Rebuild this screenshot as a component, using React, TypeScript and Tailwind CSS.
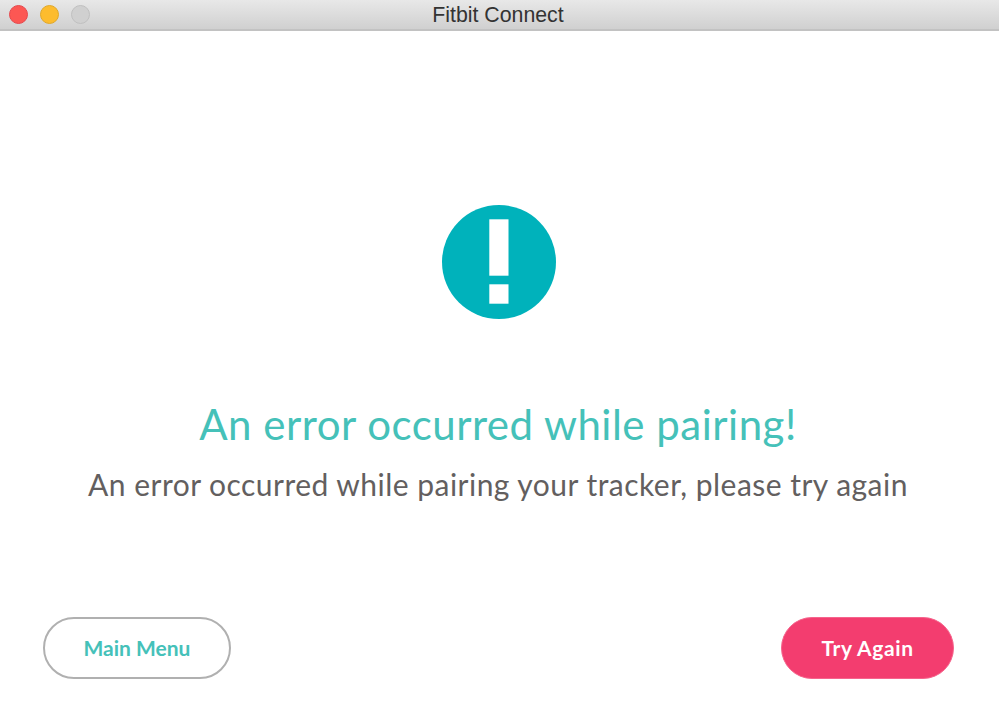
function AlertIcon() {
  return (
    <svg width="114" height="114" viewBox="0 0 114 114" className="mr-[2px] block">
      <circle cx="57" cy="57" r="57" fill="#00b2bb" />
      <rect x="47.3" y="14.3" width="19.2" height="56.4" fill="#fff" />
      <rect x="47.3" y="79.3" width="19.2" height="19.4" fill="#fff" />
    </svg>
  );
}

export default function App() {
  return (
    <div className="flex h-[724px] w-[999px] flex-col overflow-hidden bg-white font-['Lato',sans-serif]">
      <div className="relative flex h-[31px] shrink-0 items-center border-b-2 border-[#c2c2c2] bg-gradient-to-b from-[#e8e8e8] to-[#d0d0d0]">
        <div className="flex items-center gap-[12px] pl-[9px]">
          <span className="h-[19px] w-[19px] rounded-full border border-[#e5484d] bg-[#fc5753]" />
          <span className="h-[19px] w-[19px] rounded-full border border-[#e0a82a] bg-[#fdbc2e]" />
          <span className="h-[19px] w-[19px] rounded-full border border-[#c0c0c0] bg-[#d0d0d0]" />
        </div>
        <div className="absolute inset-0 flex items-center justify-center pt-[2px] pr-[3px] font-['Liberation_Sans',sans-serif] text-[21.3px] text-[#333333]">
          Fitbit Connect
        </div>
      </div>

      <div className="flex flex-1 flex-col items-center pt-[174px]">
        <AlertIcon />
        <h1 className="mt-[80px] mr-[3px] text-[42px] leading-[50px] font-normal tracking-[0.5px] text-[#45c1b9]">An error occurred while pairing!</h1>
        <p className="mt-[15px] mr-[3px] text-[30px] leading-[40px] tracking-[0.47px] text-[#635f5f]">An error occurred while pairing your tracker, please try again</p>

        <div className="mt-[113px] flex w-full items-start justify-between pr-[45px] pl-[43px]">
          <button className="h-[62px] w-[188px] rounded-full border-2 border-[#b0b0b0] bg-white text-[21px] font-bold text-[#45c1b9]">
            Main Menu
          </button>
          <button className="h-[62px] w-[173px] rounded-full border border-[#f6648c] bg-[#f33d6f] text-[21px] font-bold tracking-[0.6px] text-white">
            Try Again
          </button>
        </div>
      </div>
    </div>
  );
}
